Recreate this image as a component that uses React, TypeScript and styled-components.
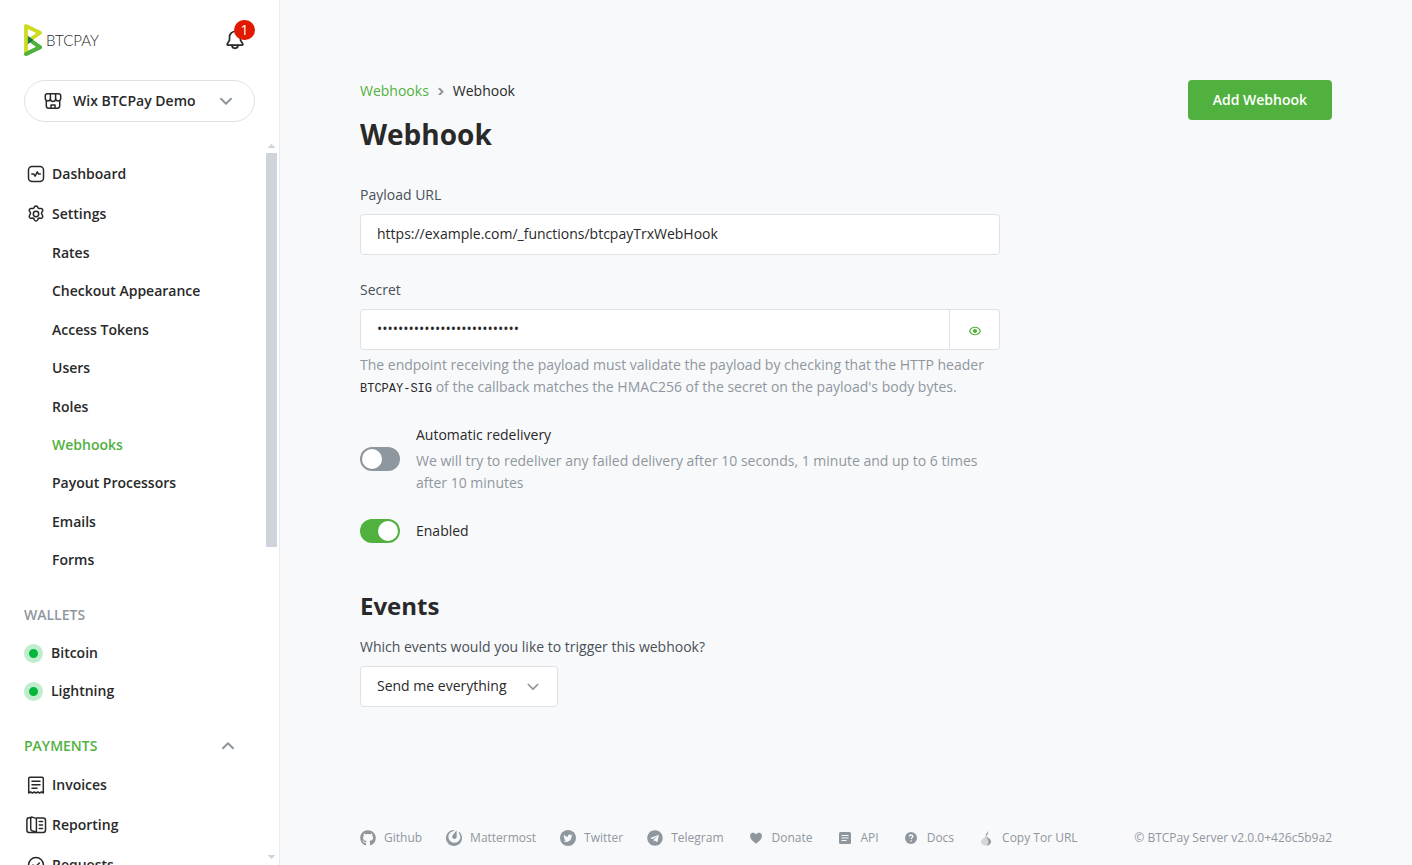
import React from "react";
import styled, { createGlobalStyle } from "styled-components";
import { FaGithub, FaTelegram } from "react-icons/fa";
import { SiMattermost } from "react-icons/si";

const color = {
  body: "#f8f9fb",
  white: "#ffffff",
  border: "#dee2e6",
  divider: "#e9ecef",
  text: "#292929",
  label: "#495057",
  muted: "#8f979e",
  primary: "#51b13e",
  success: "#02b739",
  successSoft: "#c0edcd",
  danger: "#e11900",
  thumb: "#ced3dc",
};

const GlobalStyle = createGlobalStyle`
  *, *::before, *::after { box-sizing: border-box; }
  body {
    margin: 0;
    background: ${color.body};
    color: ${color.text};
    font-family: "Open Sans", "Noto Sans", sans-serif;
    font-size: 14px;
    line-height: 22px;
  }
  h1, h2, p, ul { margin: 0; padding: 0; }
  ul { list-style: none; }
  a { color: inherit; text-decoration: none; }
  button, input, select { font: inherit; color: inherit; }
  svg { display: block; flex: none; }
`;

const Layout = styled.div`
  display: flex;
  min-height: 100vh;
`;

/* Sidebar */

const Sidebar = styled.header`
  position: sticky;
  top: 0;
  flex: none;
  display: flex;
  flex-direction: column;
  width: 280px;
  height: 100vh;
  background: ${color.white};
  border-right: 1px solid ${color.divider};
`;

const SidebarTop = styled.div`
  display: flex;
  flex-direction: column;
  gap: 24px;
  padding: 24px 24px 20px;
`;

const BrandRow = styled.div`
  display: flex;
  align-items: center;
  justify-content: space-between;
  height: 32px;
`;

const Brand = styled.a`
  display: flex;
  align-items: center;
  gap: 4px;
  font-family: Lato, Roboto, sans-serif;
  font-size: 15px;
  font-weight: 300;
`;

const BellButton = styled.button`
  position: relative;
  width: 32px;
  height: 32px;
  padding: 4px 0;
  border: 0;
  background: none;
  cursor: pointer;
`;

const Badge = styled.span`
  position: absolute;
  top: -4px;
  right: 0;
  min-width: 21px;
  height: 20px;
  border-radius: 10px;
  background: ${color.danger};
  color: ${color.white};
  font-size: 14px;
  line-height: 20px;
  text-align: center;
`;

const StoreButton = styled.button`
  display: flex;
  align-items: center;
  gap: 8px;
  height: 42px;
  padding: 0 16px;
  border: 1px solid ${color.border};
  border-radius: 21px;
  background: ${color.white};
  font-weight: 600;
  cursor: pointer;
`;

const StoreName = styled.span`
  flex: 1;
  text-align: left;
`;

const NavFrame = styled.div`
  flex: 1;
  display: flex;
  min-height: 0;
`;

const Nav = styled.nav`
  flex: 1;
  padding: 12px 26px 0 24px;
  overflow-y: auto;
  scrollbar-width: none;
`;

const NavSection = styled.section`
  margin-top: 17px;
`;

const SectionTitle = styled.div<{ $active?: boolean }>`
  display: flex;
  align-items: center;
  justify-content: space-between;
  height: 38px;
  color: ${(p) => (p.$active ? color.primary : color.muted)};
  font-weight: 600;
  text-transform: uppercase;
`;

const NavLink = styled.a<{ $active?: boolean; $compact?: boolean }>`
  display: flex;
  align-items: center;
  gap: ${(p) => (p.$compact ? "8px" : "4px")};
  height: ${(p) => (p.$compact ? "38px" : "40px")};
  color: ${(p) => (p.$active ? color.primary : color.text)};
  font-weight: 600;
`;

const SubList = styled.ul`
  display: flex;
  flex-direction: column;
  justify-content: space-between;
  height: 345px;
  padding-left: 28px;
`;

const StatusDot = styled.span`
  width: 19px;
  height: 19px;
  border: 5px solid ${color.successSoft};
  border-radius: 50%;
  background: ${color.success};
`;

const Scrollbar = styled.div`
  display: flex;
  flex-direction: column;
  width: 11px;
  margin-right: 2px;
  padding: 2px 0 6px;
  align-items: center;
`;

const ScrollTrack = styled.div`
  flex: 1;
  width: 11px;
  margin: 5px 0 3px;
`;

const ScrollThumb = styled.div`
  height: 56.3%;
  background: ${color.thumb};
`;

const ScrollArrow = styled.span<{ $down?: boolean }>`
  width: 8px;
  height: 4px;
  background: ${color.thumb};
  clip-path: ${(p) =>
    p.$down ? "polygon(0 0, 100% 0, 50% 100%)" : "polygon(50% 0, 100% 100%, 0 100%)"};
`;

/* Main column */

const Main = styled.div`
  flex: 1;
  display: flex;
  flex-direction: column;
  min-width: 0;
  padding: 80px 80px 0;
`;

const PageHeader = styled.div`
  display: flex;
  align-items: flex-start;
  justify-content: space-between;
`;

const Breadcrumb = styled.nav`
  display: flex;
  align-items: center;
  gap: 8px;
  a { color: ${color.primary}; }
`;

const PageTitle = styled.h1`
  margin-top: 16px;
  font-size: 28px;
  font-weight: 700;
  line-height: 32px;
`;

const PrimaryButton = styled.button`
  height: 40px;
  padding: 0 25px;
  border: 0;
  border-radius: 4px;
  background: ${color.primary};
  color: ${color.white};
  font-weight: 600;
  cursor: pointer;
`;

const Form = styled.form`
  display: flex;
  flex-direction: column;
  max-width: 640px;
  margin-top: 34px;
`;

const Field = styled.div`
  display: flex;
  flex-direction: column;
  margin-bottom: 24px;
`;

const Label = styled.label`
  margin-bottom: 8px;
  color: ${color.label};
`;

const TextInput = styled.input`
  flex: 1;
  min-width: 0;
  height: 41px;
  padding: 0 16px 2px;
  border: 1px solid ${color.border};
  border-radius: 4px;
  background: ${color.white};
  outline: 0;
`;

const InputGroup = styled.div`
  display: flex;
  ${TextInput} {
    border-radius: 4px 0 0 4px;
  }
`;

const UrlRow = styled.div`
  display: flex;
`;

const RevealButton = styled.button`
  display: flex;
  align-items: center;
  justify-content: center;
  width: 50px;
  padding: 2px 0 0;
  border: 1px solid ${color.border};
  border-left: 0;
  border-radius: 0 4px 4px 0;
  background: ${color.white};
  color: ${color.primary};
  cursor: pointer;
`;

const HelpText = styled.p`
  margin-top: 4px;
  color: ${color.muted};
  code {
    color: ${color.text};
    font-family: "Liberation Mono", monospace;
    font-size: 12px;
  }
`;

const SwitchRow = styled.div`
  display: flex;
  align-items: center;
  gap: 16px;
  min-height: 26px;
  & + & {
    margin-top: 24px;
  }
`;

const Switch = styled.input`
  appearance: none;
  flex: none;
  width: 40px;
  height: 24px;
  margin: 0;
  padding: 2px;
  border-radius: 12px;
  background: ${color.muted};
  cursor: pointer;
  &::before {
    content: "";
    display: block;
    width: 20px;
    height: 20px;
    border-radius: 50%;
    background: ${color.white};
  }
  &:checked {
    background: ${color.primary};
  }
  &:checked::before {
    margin-left: auto;
  }
`;

const SectionHeading = styled.h2`
  margin: 47px 0 15px;
  font-size: 24px;
  font-weight: 700;
  line-height: 30px;
`;

const SelectBox = styled.div`
  display: grid;
  align-items: center;
  width: 198px;
  > * {
    grid-area: 1 / 1;
  }
  > svg {
    justify-self: end;
    margin-right: 16px;
    pointer-events: none;
    color: ${color.muted};
  }
`;

const Select = styled.select`
  appearance: none;
  width: 100%;
  height: 41px;
  padding: 0 40px 2px 16px;
  border: 1px solid ${color.border};
  border-radius: 4px;
  background: ${color.white};
`;

const Footer = styled.footer`
  display: flex;
  align-items: center;
  justify-content: space-between;
  margin-top: auto;
  padding: 16px 0;
  color: ${color.muted};
  font-size: 12px;
  white-space: nowrap;
`;

const FooterLinks = styled.div`
  display: flex;
  gap: 24px;
`;

const FooterLink = styled.a`
  display: flex;
  align-items: center;
  gap: 8px;
`;

/* Icons */

const Icon = ({ size = 24, box = 24, width = 1.5, children }: {
  size?: number; box?: number; width?: number; children: React.ReactNode;
}) => (
  <svg width={size} height={size} viewBox={`0 0 ${box} ${box}`} fill="none" stroke="currentColor"
    strokeWidth={width} strokeLinecap="round" strokeLinejoin="round" aria-hidden="true">
    {children}
  </svg>
);

const LogoMark = () => (
  <svg width="18" height="32" viewBox="0 0 18 32" fill="none" strokeWidth="3.8"
    strokeLinecap="round" strokeLinejoin="round" aria-hidden="true">
    <path d="M2 30 16 23.3 5.500 15.800" stroke="#51b13e" />
    <path d="M2 30V2l14 6.700L5.500 16.200" stroke="#cedc21" />
    <path d="M3.800 11.800v8.400L9.600 16z" fill="#1e7a44" />
    <path d="M2 30 16 23.300 9.800 18.800" stroke="#51b13e" />
  </svg>
);

const BellIcon = () => (
  <Icon width={1.7}>
    <path d="M12 3.500A5.500 5.500 0 0 0 6.500 9v3.300l-2.200 3.500c-.4.700 0 1.300.7 1.300h14c.7 0 1.100-.6.700-1.300l-2.200-3.500V9A5.500 5.500 0 0 0 12 3.500Z" />
    <path d="M9 17.300a3 3 0 0 0 6 0" />
  </Icon>
);

const StoreIcon = () => (
  <Icon>
    <path d="M6.500 4.700h11c1.200 0 2.200.9 2.200 2.100V10a2.600 2.400 0 0 1-5.100 0 2.600 2.400 0 0 1-5.200 0 2.600 2.400 0 0 1-5.100 0V6.800c0-1.200 1-2.100 2.200-2.100Z" />
    <path d="M9.400 5v5M14.600 5v5M5.300 12.500v4.300c0 1.300 1 2.400 2.300 2.400h8.800c1.300 0 2.300-1.100 2.300-2.400v-4.300M10 19v-2.900h4V19" />
  </Icon>
);

const DashboardIcon = () => (
  <Icon>
    <rect x="4.500" y="4.500" width="15" height="15" rx="3.500" />
    <path d="m7.800 12 2 .1 1.300 2.100 2.200-4.400 1.300 2.300 1.700-.1" />
  </Icon>
);

const SettingsIcon = () => (
  <Icon width={1.35}>
    <g transform="translate(12 12) scale(1.12) translate(-12 -12)">
      <circle cx="12" cy="12" r="2.400" />
      <path d="M10.600 5.700c.5-1.200 2.300-1.200 2.800 0l.3.600c.3.600.9.900 1.500.8l1.100-.1c1.300-.1 2.200 1.400 1.500 2.500l-.6 1c-.4.500-.4 1.300 0 1.800l.6 1c.7 1.100-.2 2.600-1.500 2.500l-1.100-.1c-.6-.1-1.200.3-1.500.8l-.3.800c-.5 1.200-2.300 1.200-2.800 0l-.3-.8c-.3-.5-.9-.9-1.500-.8l-1.100.1c-1.300.1-2.200-1.400-1.500-2.500l.6-1c.4-.5.400-1.300 0-1.800l-.6-1c-.7-1.100.2-2.600 1.500-2.500l1.100.1c.6.1 1.200-.2 1.500-.8Z" />
    </g>
  </Icon>
);

const InvoiceIcon = () => (
  <Icon>
    <path d="M4.700 20V5.600c0-.8.600-1.300 1.300-1.300h12c.7 0 1.300.5 1.300 1.300V20l-1.900-1-1.800 1-1.800-1-1.800 1-1.800-1-1.800 1-1.800-1Z" />
    <path d="M8 8.200h8M8 11.700h8M8 15.200h5" />
  </Icon>
);

const ReportingIcon = () => (
  <Icon>
    <path d="M7.500 4.600 5 4.800c-1.200.1-2.100.9-2.100 2.100v10.300c0 1.200.9 2.200 2.100 2.200h14.200c1.300 0 2.300-.9 2.300-2.200V7.200c0-1.300-1-2.300-2.300-2.300h-6.700" />
    <path d="M6.700 5.200c0-.8.700-1.300 1.400-1.100l3.200 1c.7.200 1.100.8 1.100 1.500v12.600l-4.300-1.400c-.8-.3-1.400-.9-1.400-1.700ZM15.300 8.500h3.200M15.300 12h3.200M15.300 15.500h3.200" />
  </Icon>
);

const RequestsIcon = () => (
  <Icon>
    <circle cx="12" cy="12" r="7.500" />
    <path d="m9 12 2.200 2.200L15.300 10" />
  </Icon>
);

const ChevronDown = () => <Icon width={2}><path d="m7 9.700 5 5 5-5" /></Icon>;
const ChevronUp = () => <Icon width={2}><path d="m7 14.300 5-5 5 5" /></Icon>;

const SelectChevron = () => (
  <Icon size={16} box={16} width={1.7}><path d="m2.300 5.500 4.700 4.700 4.700-4.700" /></Icon>
);

const CrumbChevron = () => (
  <Icon size={8} box={8} width={2}><path d="m2.500 1.700 3 3-3 3" /></Icon>
);

const EyeIcon = () => (
  <Icon size={12} box={12} width={1.2}>
    <path d="M.6 6C2.600 1 9.400 1 11.400 6 9.400 11 2.600 11 .6 6Z" />
    <circle cx="6" cy="6" r="1.500" fill="currentColor" />
  </Icon>
);

const Solid = ({ children }: { children: React.ReactNode }) => (
  <svg width="16" height="16" viewBox="0 0 16 16" fill="currentColor" aria-hidden="true">{children}</svg>
);

const TwitterIcon = () => (
  <Solid>
    <circle cx="8" cy="8" r="8" />
    <path fill={color.body} d="M12.600 5.300c-.3.200-.7.300-1.100.3.400-.2.700-.6.800-1-.4.200-.8.400-1.200.5a1.900 1.900 0 0 0-3.200 1.700c-1.600-.1-3-.8-3.900-2-.5.900-.3 2 .6 2.500-.3 0-.6-.1-.9-.2 0 .9.700 1.700 1.500 1.900-.3.100-.6.100-.8 0 .2.800.9 1.300 1.700 1.300-.8.600-1.800.9-2.800.8 3.600 2.200 8.300 0 8.300-4.800.4-.3.700-.6 1-1Z" />
  </Solid>
);

const HeartIcon = () => (
  <Solid><path d="M8 13.700C4.500 11 2 8.800 2 6a3.200 3.200 0 0 1 6-1.600A3.200 3.200 0 0 1 14 6c0 2.800-2.500 5-6 7.700Z" /></Solid>
);

const ApiIcon = () => (
  <Solid>
    <rect x="2" y="2" width="12" height="12" rx="1.500" />
    <path d="M4.500 5.500h7M4.500 8h7M4.500 10.500h5" stroke={color.body} strokeWidth="1.200" />
  </Solid>
);

const DocsIcon = () => (
  <Solid>
    <circle cx="8" cy="8" r="6" />
    <path d="M6.300 6.600c0-2.200 3.500-2.100 3.500 0 0 1.200-1.700 1.200-1.700 2.500M8.100 10.200v1.300" stroke={color.body} strokeWidth="1.400" fill="none" />
  </Solid>
);

const TorIcon = () => (
  <Solid>
    <path d="M9 5.500c0 1.200.4 1.600 1.700 2.700 1.400 1.100 2.300 2 2.300 3.500 0 2-2.200 3.800-5 3.800s-5-1.800-5-3.800c0-1.600 1-2.500 2.400-3.500C7 7 7.600 6.500 7.400 5.200L10.500 1 9.700 4l2.300-1.500C10.500 4 9 4.500 9 5.500Z" opacity=".35" />
    <path d="M8.500 5.500c.2 1.500 1.200 2 2.200 2.800 1.400 1 2.300 1.900 2.300 3.400 0 2-2.200 3.800-4.500 3.800 1.600-1.400 2.200-2.800 2-4.300C10.300 9.700 8.500 8 8.500 5.500ZM7.500 5 10.500 1 9.700 3.500 8.500 5.500Z" />
  </Solid>
);

/* Content */

const settingsPages = [
  "Rates", "Checkout Appearance", "Access Tokens", "Users", "Roles",
  "Webhooks", "Payout Processors", "Emails", "Forms",
];

const footerLinks = [
  { label: "Github", icon: <FaGithub size={16} /> },
  { label: "Mattermost", icon: <SiMattermost size={16} /> },
  { label: "Twitter", icon: <TwitterIcon /> },
  { label: "Telegram", icon: <FaTelegram size={16} /> },
  { label: "Donate", icon: <HeartIcon /> },
  { label: "API", icon: <ApiIcon /> },
  { label: "Docs", icon: <DocsIcon /> },
  { label: "Copy Tor URL", icon: <TorIcon /> },
];

const Muted = styled.span`
  color: ${color.muted};
`;

export default function App() {
  return (
    <Layout>
      <GlobalStyle />
      <Sidebar>
        <SidebarTop>
          <BrandRow>
            <Brand href="#"><LogoMark />BTCPAY</Brand>
            <BellButton type="button" aria-label="Notifications">
              <BellIcon />
              <Badge>1</Badge>
            </BellButton>
          </BrandRow>
          <StoreButton type="button">
            <StoreIcon />
            <StoreName>Wix BTCPay Demo</StoreName>
            <Muted><ChevronDown /></Muted>
          </StoreButton>
        </SidebarTop>
        <NavFrame>
          <Nav>
            <NavLink href="#"><DashboardIcon />Dashboard</NavLink>
            <NavLink href="#"><SettingsIcon />Settings</NavLink>
            <SubList>
              {settingsPages.map((page) => (
                <li key={page}>
                  <NavLink href="#" $compact $active={page === "Webhooks"}>{page}</NavLink>
                </li>
              ))}
            </SubList>
            <NavSection>
              <SectionTitle>Wallets</SectionTitle>
              <NavLink href="#" $compact><StatusDot />Bitcoin</NavLink>
              <NavLink href="#" $compact><StatusDot />Lightning</NavLink>
            </NavSection>
            <NavSection>
              <SectionTitle $active>Payments<Muted><ChevronUp /></Muted></SectionTitle>
              <NavLink href="#"><InvoiceIcon />Invoices</NavLink>
              <NavLink href="#"><ReportingIcon />Reporting</NavLink>
              <NavLink href="#"><RequestsIcon />Requests</NavLink>
            </NavSection>
          </Nav>
          <Scrollbar aria-hidden="true">
            <ScrollArrow />
            <ScrollTrack><ScrollThumb /></ScrollTrack>
            <ScrollArrow $down />
          </Scrollbar>
        </NavFrame>
      </Sidebar>

      <Main>
        <PageHeader>
          <div>
            <Breadcrumb aria-label="Breadcrumb">
              <a href="#">Webhooks</a>
              <Muted><CrumbChevron /></Muted>
              <span>Webhook</span>
            </Breadcrumb>
            <PageTitle>Webhook</PageTitle>
          </div>
          <PrimaryButton type="submit" form="webhook-form">Add Webhook</PrimaryButton>
        </PageHeader>

        <Form id="webhook-form" onSubmit={(e) => e.preventDefault()}>
          <Field>
            <Label htmlFor="payload-url">Payload URL</Label>
            <UrlRow>
              <TextInput id="payload-url" type="text" defaultValue="https://example.com/_functions/btcpayTrxWebHook" />
            </UrlRow>
          </Field>
          <Field>
            <Label htmlFor="secret">Secret</Label>
            <InputGroup>
              <TextInput id="secret" type="password" autoComplete="off" defaultValue={"x".repeat(27)} />
              <RevealButton type="button" aria-label="Toggle secret visibility"><EyeIcon /></RevealButton>
            </InputGroup>
            <HelpText>
              The endpoint receiving the payload must validate the payload by checking that the HTTP header{" "}
              <code>BTCPAY-SIG</code> of the callback matches the HMAC256 of the secret on the payload's body bytes.
            </HelpText>
          </Field>
          <SwitchRow>
            <Switch id="redelivery" type="checkbox" />
            <div>
              <label htmlFor="redelivery">Automatic redelivery</label>
              <HelpText>
                We will try to redeliver any failed delivery after 10 seconds, 1 minute and up to 6 times after 10 minutes
              </HelpText>
            </div>
          </SwitchRow>
          <SwitchRow>
            <Switch id="enabled" type="checkbox" defaultChecked />
            <label htmlFor="enabled">Enabled</label>
          </SwitchRow>
          <SectionHeading>Events</SectionHeading>
          <Label htmlFor="events">Which events would you like to trigger this webhook?</Label>
          <SelectBox>
            <Select id="events" defaultValue="all">
              <option value="all">Send me everything</option>
            </Select>
            <SelectChevron />
          </SelectBox>
        </Form>

        <Footer>
          <FooterLinks>
            {footerLinks.map(({ label, icon }) => (
              <FooterLink key={label} href="#">{icon}{label}</FooterLink>
            ))}
          </FooterLinks>
          <span>© BTCPay Server v2.0.0+426c5b9a2</span>
        </Footer>
      </Main>
    </Layout>
  );
}
